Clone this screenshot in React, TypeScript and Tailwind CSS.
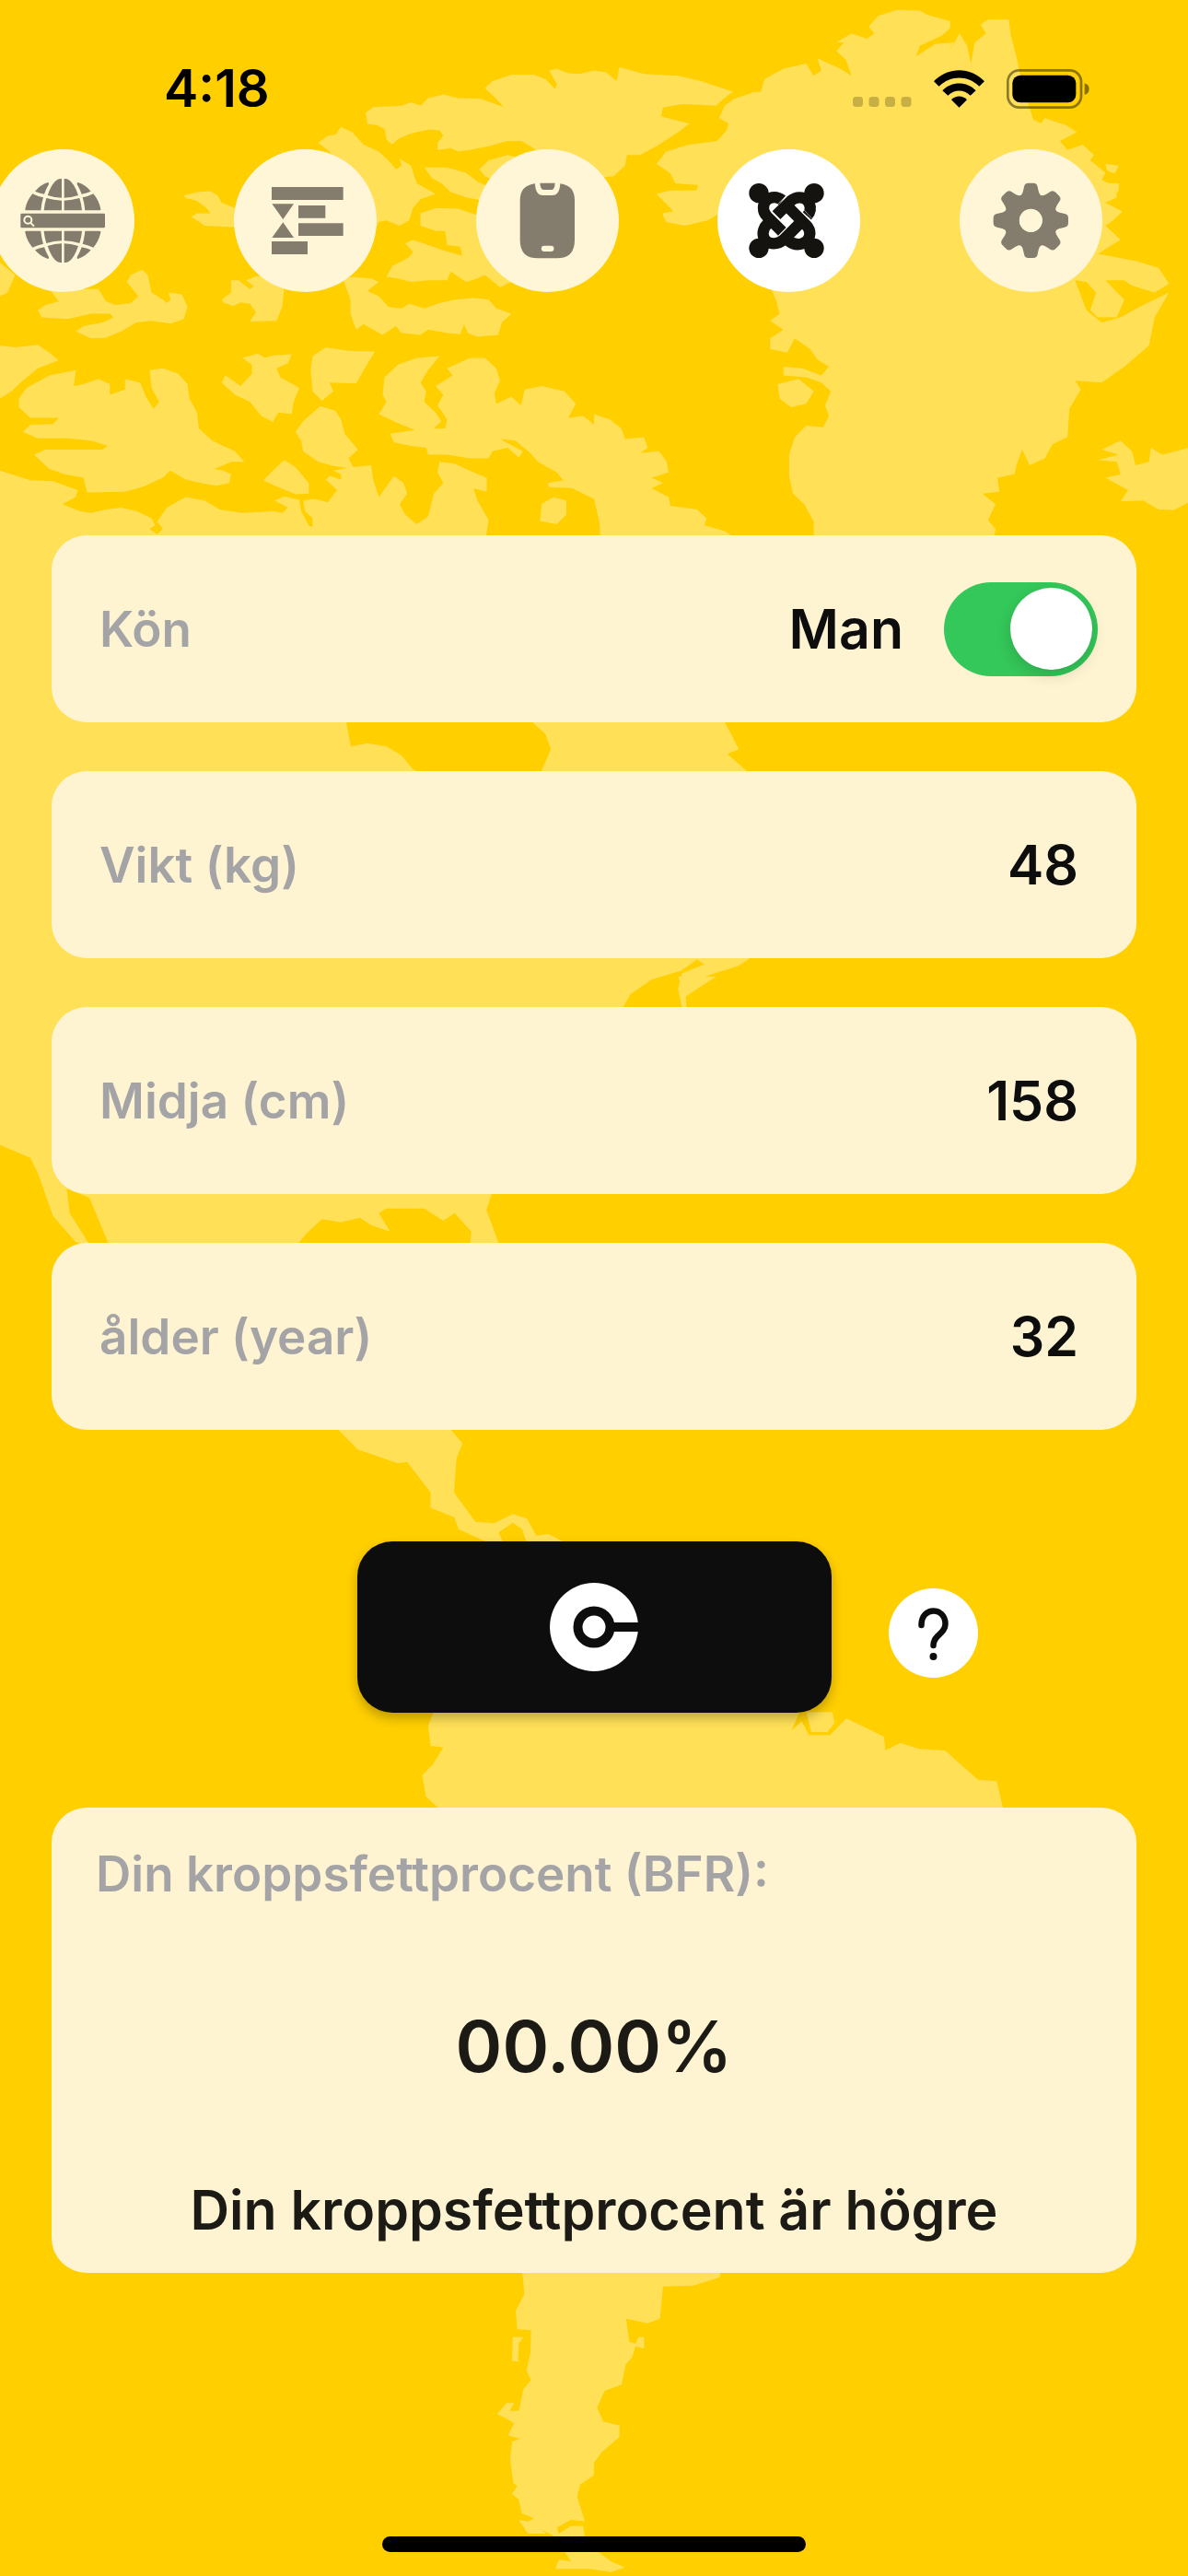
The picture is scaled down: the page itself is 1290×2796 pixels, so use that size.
import { useState } from 'react';
import type { ReactNode } from 'react';
import clsx from 'clsx';

// Map of the Americas behind the whole page
function WorldMap() {
    return (
        <svg
            className="absolute inset-0 -z-10 h-full w-full"
            viewBox="0 0 1290 2796"
            preserveAspectRatio="xMidYMin slice"
            fill="#ffe057"
            aria-hidden="true"
        >
            {/* Arctic islands and northern Canada */}
            <g transform="scale(.41135 .38265)">
                <path d="M965 320L985 304L1060 300L1085 290L1110 300L1130 278L1170 268L1210 278L1270 280L1330 304L1310 280L1280 250L1300 230L1350 212L1410 212L1440 225L1465 252L1470 240L1450 200L1470 195L1500 208L1530 210L1568 200L1600 205L1628 230L1635 190L1700 210L1790 215L1850 230L1935 260L1910 280L1890 300L1800 295L1750 305L1745 330L1780 340L1820 350L1790 375L1740 410L1690 440L1655 440L1650 470L1620 500L1568 505L1500 520L1420 430L1400 415L1375 400L1340 400L1290 415L1240 425L1210 430L1190 420L1155 425L1155 405L1170 385L1160 370L1130 368L1080 380L1050 395L1035 410L1020 395L1015 365L995 355L970 352Z" />
                <path d="M840 405L865 385L885 382L900 360L930 375L960 410L1000 430L1030 460L1045 480L1060 470L1055 450L1085 470L1100 520L1150 550L1110 565L1090 590L1080 625L1055 640L1020 625L1000 630L985 660L900 500L870 430Z" />
                <path d="M485 555L520 545L555 542L575 555L585 575L620 590L630 645L540 640L505 615L520 605L555 605L545 590L520 570L490 562Z" />
                <path d="M1120 475L1180 475L1230 490L1260 515L1290 530L1280 570L1230 560L1190 545L1165 520L1140 505Z" />
                <path d="M1265 480L1290 455L1340 440L1360 445L1320 520L1280 500Z" />
                <path d="M1110 605L1150 590L1210 592L1260 610L1290 680L1350 800L1320 815L1280 780L1260 790L1230 800L1190 770L1180 795L1130 795L1085 800L1050 790L1020 785L1035 755L1080 730L1090 715L1070 690L1090 680L1130 695L1170 710L1220 725L1215 700L1180 695L1175 655L1150 655L1110 640Z" />
                <path d="M905 790L930 785L980 790L1000 800L970 825L1000 840L1025 870L1060 875L1080 862L1120 875L1160 860L1200 850L1250 845L1290 850L1310 875L1350 890L1325 915L1315 950L1260 955L1235 945L1225 920L1215 948L1180 945L1130 935L1110 950L1060 945L1045 925L1010 950L960 920L940 935L925 890L925 850Z" />
                <path d="M585 850L610 830L610 795L630 795L660 820L670 812L650 795L670 785L700 780L750 820L745 870L730 910L660 912L675 885L660 862L635 858L615 868L590 858Z" />
                <path d="M0 745L40 780L20 830L0 840Z" />
                <path d="M100 880L120 865L155 855L130 820L260 820L280 855L305 865L345 860L365 840L335 800L345 780L375 765L390 780L400 830L430 850L440 860L450 850L445 830L480 835L495 870L485 905L450 918L400 910L360 915L320 940L280 958L240 960L200 940L220 925L270 915L300 900L290 890L240 890L180 905L110 900Z" />
                <path d="M0 980L40 985L100 978L130 1000L155 1022L100 1045L60 1080L30 1110L0 1130Z" />
                <path d="M200 1050L195 1095L220 1090L260 1075L290 1090L290 1120L330 1105L330 1075L370 1085L385 1125L405 1160L420 1140L400 1100L395 1050L430 1045L470 1060L495 1090L500 1130L520 1170L525 1215L560 1250L620 1280L645 1310L610 1310L590 1320L565 1330L590 1335L610 1345L605 1370L570 1378L530 1370L490 1360L450 1335L430 1355L380 1380L330 1395L230 1397L220 1355L170 1345L130 1330L90 1290L120 1275L200 1275L270 1275L285 1265L240 1250L180 1243L100 1243L60 1225L80 1205L140 1203L155 1185L80 1185L50 1155L50 1130L70 1100L130 1065Z" />
                <path d="M0 1335L80 1362L140 1365L205 1390L200 1410L165 1430L210 1450L240 1455L280 1445L320 1440L360 1450L400 1470L410 1490L395 1500L415 1515L430 1500L415 1480L440 1440L490 1410L540 1420L580 1445L640 1455L720 1450L745 1455L760 1440L725 1420L750 1408L790 1418L795 1450L815 1490L825 1495L825 1470L805 1450L800 1420L830 1415L865 1425L890 1390L860 1360L870 1350L900 1360L900 1345L880 1335L930 1325L980 1320L985 1360L1000 1410L1020 1380L1040 1350L1065 1370L1075 1400L1055 1430L1070 1460L1100 1487L1130 1465L1145 1400L1170 1370L1155 1340L1160 1310L1200 1315L1250 1340L1285 1355L1285 1395L1250 1385L1260 1420L1290 1475L1280 1540L300 1540L300 1700L0 1700Z" />
                <path d="M640 1015L680 1003L700 1015L720 1008L770 1005L760 1030L730 1045L740 1070L790 1100L775 1140L770 1175L735 1170L720 1197L690 1180L660 1140L620 1120L585 1085L595 1065L635 1095L665 1060L665 1035Z" />
                <path d="M820 1050L825 1010L860 985L920 995L990 997L960 1050L940 1088L870 1085L880 1110L850 1137L825 1110Z" />
                <path d="M845 1152L885 1165L900 1190L910 1230L945 1275L920 1300L935 1330L880 1322L840 1310L800 1280L795 1250L780 1225L800 1195Z" />
                <path d="M750 1305L780 1325L815 1370L815 1400L780 1402L720 1375L695 1362L720 1335Z" />
                <path d="M1160 1010L1100 1015L1050 1035L1015 1070L1010 1120L1020 1140L1000 1175L1050 1200L1095 1220L1030 1230L1040 1255L1085 1265L1125 1270L1130 1290L1180 1290L1240 1300L1290 1300L1300 1280L1340 1270L1370 1298L1380 1280L1320 1245L1360 1250L1400 1285L1420 1310L1470 1340L1500 1380L1568 1415L1582 1480L1585 1530L1950 1530L1910 1505L1860 1490L1865 1470L1840 1445L1770 1435L1765 1410L1720 1385L1750 1370L1720 1355L1765 1340L1760 1310L1740 1280L1690 1285L1710 1270L1700 1240L1650 1245L1640 1215L1610 1190L1568 1175L1568 1205L1540 1180L1500 1185L1520 1145L1490 1110L1430 1095L1385 1105L1375 1150L1350 1125L1310 1145L1305 1115L1320 1080L1310 1045L1280 1015L1240 1015L1180 1045L1195 1065L1150 1095L1170 1120L1155 1150L1180 1190L1175 1215L1145 1215L1165 1195L1150 1170L1120 1140L1125 1110L1110 1085L1130 1050Z" />
                <path d="M1430 1430L1460 1410L1495 1420L1495 1460L1470 1487L1425 1478Z" />
                <path d="M1445 1370L1500 1360L1520 1385L1450 1382Z" />
            </g>

            {/* Greenland and Iceland */}
            <g transform="translate(645 0) scale(.41135 .38265)">
                <path d="M580 1530L580 1480L555 1430L525 1400L515 1350L515 1290L530 1240L560 1207L605 1212L620 1180L610 1150L625 1110L600 1085L560 1070L500 1065L500 1040L550 1045L600 1065L620 1040L590 1020L570 990L530 960L510 1000L465 990L465 960L500 935L465 910L490 890L480 850L460 800L340 600L300 625L240 640L190 630L180 605L210 600L165 550L200 540L270 540L275 525L215 520L200 490L165 465L190 430L250 410L325 400L350 370L355 350L330 335L345 300L370 280L420 262L440 260L450 225L500 195L560 180L580 215L600 200L590 165L620 180L650 195L680 215L665 170L640 145L660 120L640 120L680 95L720 110L740 95L725 75L750 45L800 28L860 30L880 42L940 60L940 80L920 100L860 130L850 160L900 125L950 120L930 160L965 95L985 130L995 180L1005 120L1035 95L1020 70L1040 55L1095 55L1100 100L1115 160L1130 240L1160 340L1180 350L1190 335L1245 355L1275 375L1230 400L1250 425L1290 410L1320 440L1310 455L1350 490L1340 510L1380 530L1380 560L1350 575L1395 600L1370 625L1350 640L1390 680L1330 720L1430 740L1490 760L1518 805L1480 830L1420 810L1400 795L1350 795L1400 850L1380 900L1330 900L1310 880L1325 830L1300 800L1270 795L1300 880L1340 915L1390 900L1440 870L1518 830L1480 900L1465 980L1400 1040L1340 1085L1270 1080L1285 1105L1255 1160L1250 1240L1210 1260L1190 1300L1150 1320L1130 1275L1115 1320L1110 1345L1065 1355L1070 1395L1025 1400L1060 1430L1040 1475L1060 1500L1055 1530Z" />
                <path d="M485 1090L540 1075L580 1110L560 1145L520 1155L490 1130ZM1350 465L1385 470L1375 492L1355 485ZM1350 520L1386 520L1384 545L1350 545Z" />
                <path d="M1330 1305L1385 1290L1340 1275L1390 1250L1420 1280L1430 1320L1465 1310L1470 1270L1500 1290L1570 1270L1570 1425L1530 1447L1490 1445L1450 1420L1390 1422L1410 1390L1350 1355L1390 1345L1380 1310Z" />
            </g>

            {/* Hudson Bay and the east coast */}
            <path
                transform="translate(0 560) scale(.8227 .3333)"
                d="M0 80L457 80L457 672L463 750L485 740L510 750L530 780L545 825L560 840L713 840L727 760L720 710L700 665L955 665L965 710L975 760L960 775L990 840L990 1440L975 1465L930 1500L905 1560L908 1680L900 1600L895 1540L900 1490L930 1460L920 1445L900 1480L860 1510L825 1570L0 1570Z"
            />
            <g transform="translate(0 1060) scale(.8227 .3333)">
                <path d="M0 -10L870 -10L835 45L820 110L650 700L642 760L660 880L620 880L622 830L600 770L585 795L560 755L510 755L500 770L515 830L490 810L475 785L450 800L425 790L405 835L390 880L145 880L118 720L88 690L92 770L120 880L100 865L70 780L50 640L40 590L0 548Z" />
                <path d="M895 0L905 65L945 0Z" />
            </g>

            {/* Central and South America */}
            <g transform="translate(340 1540) scale(.5102 .3333)">
                <path d="M50 30L95 100L180 145L200 140L250 240L250 290L300 320L310 360L375 405L405 405L395 370L425 338L445 360L455 405L540 405L500 375L475 380L455 325L425 310L385 340L345 335L300 240L305 130L318 80L290 30Z" />
                <path d="M260 940L245 1000L250 1065L277 1070L255 1125L232 1160L240 1230L275 1280L1470 1280L1455 1180L1415 1175L1345 1080L1290 1075L1250 1055L1218 1080L1215 1035L1135 975L1100 1030L1055 1030L1040 985L1018 1015L1040 940Z" />
                <path d="M1050 955L1105 955L1110 990L1095 1020L1060 1020Z" />
            </g>
            <path
                transform="translate(400 2440) scale(.3333)"
                d="M500 60L508 150L480 205L485 265L530 268L528 340L515 400L530 430L505 460L490 530L460 530L475 505L450 505L420 540L475 570L455 610L495 622L468 630L462 690L472 765L485 775L468 800L490 820L500 865L540 880L520 890L490 885L520 930L580 930L560 915L600 935L640 990L660 1020L620 1015L610 1045L720 1045L790 1055L835 1040L790 1020L750 990L705 940L700 905L660 905L620 930L615 910L660 885L705 890L680 810L690 770L735 740L735 700L760 665L818 615L818 578L765 565L745 520L770 465L825 445L838 380L860 355L870 320L898 328L898 290L880 290L870 312L850 305L840 230L910 245L950 230L960 125L1060 122L1145 95L1150 60ZM470 290L505 290L490 310L488 370L468 368Z"
            />
        </svg>
    );
}

function GlobeIcon() {
    return (
        <svg viewBox="-25 66 465 465" className="size-full" fill="currentColor" aria-hidden="true">
            {[0, 1].map((half) => (
                <g key={half} transform={half ? 'matrix(1 0 0 -1 0 597)' : undefined}>
                    {[0, 1].map((side) => (
                        <g key={side} transform={side ? 'matrix(-1 0 0 1 414 0)' : undefined}>
                            <path d="M203 162V224Q180 224 157 216Q171 174 190 164Q196 161 203 162Z" />
                            <path d="M203 233V265H145Q147 243 153 225Q177 232 203 233Z" />
                            <path d="M158 174Q162 174 161 180Q152 195 146 212Q129 209 116 203Q133 182 158 174Z" />
                            <path d="M108 211Q123 219 143 223Q137 242 135 265H88Q83 265 84 260Q90 232 108 211Z" />
                        </g>
                    ))}
                </g>
            ))}
            <rect x="69" y="275" width="275" height="47" rx="4" />
            <g fill="none" stroke="#fff6d8" strokeWidth="6">
                <circle cx="93" cy="296" r="12" />
                <path d="M101 305L113 317" />
            </g>
        </svg>
    );
}

function TimelineIcon() {
    return (
        <svg viewBox="762 66 465 465" className="size-full" fill="currentColor" aria-hidden="true">
            <path d="M885 189H1118V231H885ZM972 249H1060V290H972ZM972 307H1118V348H972ZM885 366H1002V408H885ZM886 244H957L922 294ZM886 354H957L922 304Z" />
        </svg>
    );
}

function PhoneIcon() {
    return (
        <svg viewBox="110 66 465 465" className="size-full" fill="currentColor" aria-hidden="true">
            <path
                fillRule="evenodd"
                d="M302 178Q303 216 328 216H358Q382 216 384 178Q431 184 431 232V362Q431 421 372 421H312Q253 421 253 362V232Q253 184 302 178ZM332 380A9 9 0 0 0 332 399H354A9 9 0 0 0 354 380Z"
            />
            <path d="M318 176H367Q366 198 355 198H331Q319 198 318 176Z" />
        </svg>
    );
}

function KnotIcon() {
    return (
        <svg viewBox="898 66 465 465" className="size-full" fill="none" strokeWidth="37" aria-hidden="true">
            <g fill="currentColor">
                <circle cx="1033" cy="209" r="32" />
                <circle cx="1213" cy="209" r="32" />
                <circle cx="1033" cy="388" r="32" />
                <circle cx="1213" cy="388" r="32" />
            </g>
            <g stroke="currentColor">
                <path d="M1109 232C1085 213 1048 224 1048 257Q1048 273 1060 285L1109 334" />
                <path d="M1061 309C1038 330 1042 373 1082 373Q1100 373 1113 361L1163 311" />
                <path d="M1130 364C1160 388 1199 371 1199 340Q1199 326 1188 314L1131 257" />
                <path d="M1090 281L1136 235Q1149 223 1166 223C1198 223 1211 260 1190 283" />
            </g>
            <path d="M1122 217L1076 263M1074 268L1106 300M1100 344L1127 317M1166 248L1206 292" stroke="#fff" strokeWidth="1.500" />
        </svg>
    );
}

function GearIcon() {
    return (
        <svg viewBox="-232 -232 465 465" className="size-full" fill="currentColor" aria-hidden="true">
            {[0, 45, 90, 135, 180, 225, 270, 315].map((angle) => (
                <path
                    key={angle}
                    transform={`rotate(${angle})`}
                    d="M-40 -78C-27 -82 -26 -92 -22 -110Q-20 -122 -8 -122H8Q20 -122 22 -110C26 -92 27 -82 40 -78L20 -40H-20Z"
                />
            ))}
            <circle r="62" fill="none" stroke="currentColor" strokeWidth="49" />
            <circle r="37" fill="#fff6d8" />
        </svg>
    );
}

function StatusBar() {
    return (
        <header className="flex h-[162px] items-center justify-between pt-[30px] pr-[107px] pl-[178px] text-black">
            <time className="text-[56px] leading-[64px] font-semibold">4:18</time>
            <div className="flex items-center">
                <svg className="mt-7 mr-6 h-[11px] w-[64px]" viewBox="0 0 64 11" fill="#000" fillOpacity=".22" aria-hidden="true">
                    <rect width="11" height="11" rx="3.5" />
                    <rect x="17.5" width="11" height="11" rx="3.5" />
                    <rect x="35" width="11" height="11" rx="3.5" />
                    <rect x="52.5" width="11" height="11" rx="3.5" />
                </svg>
                <svg className="mr-6 h-[41px] w-[55px]" viewBox="0 0 165 122" aria-hidden="true">
                    <path d="M0 36C46 -12 119 -12 165 36L148 53C110 16 55 16 17 53Z" />
                    <path d="M28 66C58 35 107 35 137 66L119 83C98 62 67 62 46 83Z" />
                    <path d="M57 96C72 81 93 81 108 96L82.500 122Z" />
                </svg>
                <svg className="h-[43px] w-[90px]" viewBox="0 0 270 129" aria-hidden="true">
                    <rect x="4" y="4" width="239" height="121" rx="37" fill="none" stroke="#000" strokeOpacity=".45" strokeWidth="8" />
                    <rect x="19" y="20" width="207" height="89" rx="26" />
                    <path d="M254 46Q269 50 269 65Q269 79 254 84Z" fillOpacity=".45" />
                </svg>
            </div>
        </header>
    );
}

const tabs: { name: string; icon: ReactNode }[] = [
    { name: 'globe', icon: <GlobeIcon /> },
    { name: 'timeline', icon: <TimelineIcon /> },
    { name: 'phone', icon: <PhoneIcon /> },
    { name: 'body', icon: <KnotIcon /> },
    { name: 'settings', icon: <GearIcon /> },
];

function Field({ id, label, value, onChange }: { id: string; label: string; value: string; onChange: (v: string) => void }) {
    return (
        <div className="flex h-[203px] items-center justify-between rounded-[38px] bg-[#fff4d2] pr-[63px] pl-[52px]">
            <label htmlFor={id} className="text-[53px] leading-[64px] font-semibold text-[#a4a4a6]">
                {label}
            </label>
            <input
                id={id}
                inputMode="numeric"
                value={value}
                onChange={(e) => onChange(e.target.value)}
                className="w-64 bg-transparent text-right text-[59px] leading-[72px] font-semibold text-[#0d0d0d] outline-none"
            />
        </div>
    );
}

export default function App() {
    const [activeTab, setActiveTab] = useState('body');
    const [isMan, setIsMan] = useState(true);
    const [weight, setWeight] = useState('48');
    const [waist, setWaist] = useState('158');
    const [age, setAge] = useState('32');

    return (
        <div className="relative isolate flex min-h-screen flex-col overflow-hidden bg-[#ffcf00] font-['Inter',sans-serif]">
            <WorldMap />
            <StatusBar />

            <nav className="-ml-[9px] flex justify-between pr-[93px]">
                {tabs.map((tab) => (
                    <button
                        key={tab.name}
                        type="button"
                        aria-label={tab.name}
                        onClick={() => setActiveTab(tab.name)}
                        className={clsx(
                            'size-[155px] shrink-0 rounded-full',
                            activeTab === tab.name ? 'bg-white text-[#14130f]' : 'bg-[#fff6d8] text-[#847d6e]',
                        )}
                    >
                        {tab.icon}
                    </button>
                ))}
            </nav>

            <main className="px-14 pt-[264px]">
                <form className="flex flex-col gap-[53px]" onSubmit={(e) => e.preventDefault()}>
                    <div className="flex h-[203px] items-center justify-between rounded-[38px] bg-[#fff4d2] pr-[42px] pl-[52px]">
                        <label htmlFor="sex" className="text-[53px] leading-[64px] font-semibold text-[#a4a4a6]">
                            Kön
                        </label>
                        <div className="flex items-center gap-11">
                            <span className="text-[59px] leading-[72px] font-semibold text-[#0d0d0d]">Man</span>
                            <input
                                id="sex"
                                type="checkbox"
                                role="switch"
                                checked={isMan}
                                onChange={(e) => setIsMan(e.target.checked)}
                                className="flex h-[102px] w-[167px] appearance-none items-center rounded-full bg-[#e5e0cc] px-[6px] before:size-[89px] before:rounded-full before:bg-white before:shadow-[0_6px_16px_rgba(0,0,0,0.15)] checked:justify-end checked:bg-[#34c759]"
                            />
                        </div>
                    </div>
                    <Field id="weight" label="Vikt (kg)" value={weight} onChange={setWeight} />
                    <Field id="waist" label="Midja (cm)" value={waist} onChange={setWaist} />
                    <Field id="age" label="ålder (year)" value={age} onChange={setAge} />

                    <div className="mt-[68px] grid grid-cols-[1fr_515px_1fr] items-center">
                        <button
                            type="submit"
                            aria-label="calculate"
                            className="col-start-2 flex h-[186px] items-center justify-center rounded-[38px] bg-[#0d0d0d] shadow-[0_6px_12px_rgba(0,0,0,0.25)]"
                        >
                            <svg className="size-24" viewBox="0 0 96 96" aria-hidden="true">
                                <circle cx="48" cy="48" r="48" fill="#fff" />
                                <path d="M60 48H96" stroke="#0d0d0d" strokeWidth="10" />
                                <circle cx="48" cy="48" r="17.500" fill="#fff" stroke="#0d0d0d" strokeWidth="10" />
                            </svg>
                        </button>
                        <button type="button" aria-label="help" className="mt-3 ml-[62px] size-[97px] rounded-full bg-white">
                            <svg className="size-full" viewBox="0 0 97 97" fill="none" aria-hidden="true">
                                <path
                                    d="M35.500 40C35.500 19 61.500 20 61.500 38.500C61.500 50 48.500 50 48.500 62"
                                    stroke="#0d0d0d"
                                    strokeWidth="6.500"
                                    strokeLinecap="round"
                                />
                                <circle cx="48.500" cy="74" r="4" fill="#0d0d0d" />
                            </svg>
                        </button>
                    </div>
                </form>

                <section className="mt-[103px] flex flex-col rounded-[38px] bg-[#fff4d2] pt-10 pb-8 font-semibold text-[#1c1a14]">
                    <h2 className="px-12 text-[53px] leading-[64px] text-[#a4a4a6]">Din kroppsfettprocent (BFR):</h2>
                    <output className="mt-[107px] text-center text-[77px] leading-[96px]">00.00%</output>
                    <p className="mt-[94px] text-center text-[59px] leading-[72px]">Din kroppsfettprocent är högre</p>
                </section>
            </main>

            <div className="mx-auto mt-auto mb-[26px] h-[17px] w-[460px] rounded-full bg-black" />
        </div>
    );
}
